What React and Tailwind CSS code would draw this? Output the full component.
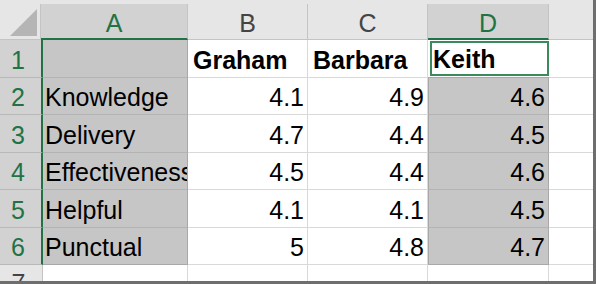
import React from "react";

const rows = [
  { n: 1, a: "", b: "Graham", c: "Barbara", d: "Keith", h: "h-[38px]", head: true },
  { n: 2, a: "Knowledge", b: "4.1", c: "4.9", d: "4.6", h: "h-[37px]" },
  { n: 3, a: "Delivery", b: "4.7", c: "4.4", d: "4.5", h: "h-[38px]" },
  { n: 4, a: "Effectiveness", b: "4.5", c: "4.4", d: "4.6", h: "h-[37px]" },
  { n: 5, a: "Helpful", b: "4.1", c: "4.1", d: "4.5", h: "h-[38px]" },
  { n: 6, a: "Punctual", b: "5", c: "4.8", d: "4.7", h: "h-[37px]" },
];

export default function App() {
  return (
    <div className="w-[596px] h-[284px] overflow-hidden bg-white border-r-[3px] border-b-[3px] border-[#6e6e6e] font-['Liberation_Sans',Arial,sans-serif] text-[25px] text-black">
      {/* header row */}
      <div className="flex h-[40px] bg-[#e6e6e6] pt-[4px]">
        <div className="w-[41px] h-[36px] shrink-0 border-r border-b border-[#c4c4c4]">
          <svg width="40" height="35" viewBox="0 0 40 35">
            <polygon points="10,32 37,5 37,32" fill="#b5b5b5" />
          </svg>
        </div>
        <div className="w-[147px] h-[36px] shrink-0 flex items-center justify-center pt-[5px] bg-[#d2d2d2] text-[#217346] border-r border-r-[#c4c4c4] border-b-2 border-b-[#217346]">
          A
        </div>
        <div className="w-[120px] h-[36px] shrink-0 flex items-center justify-center pt-[5px] text-[#444] border-r border-b border-[#c4c4c4]">
          B
        </div>
        <div className="w-[120px] h-[36px] shrink-0 flex items-center justify-center pt-[5px] text-[#444] border-r border-b border-[#c4c4c4]">
          C
        </div>
        <div className="w-[121px] h-[36px] shrink-0 flex items-center justify-center pt-[5px] bg-[#d2d2d2] text-[#217346] border-r border-r-[#c4c4c4] border-b-2 border-b-[#217346]">
          D
        </div>
        <div className="w-[44px] h-[36px] shrink-0 border-b border-[#c4c4c4]" />
      </div>

      {rows.map((r) => (
        <div key={r.n} className={`flex ${r.h}`}>
          <div className="w-[43px] shrink-0 flex items-center justify-center pr-[5px] pt-[4px] bg-[#d2d2d2] text-[#217346] border-r-2 border-r-[#217346] border-b border-b-[#b9b9b9]">
            {r.n}
          </div>
          <div
            className={`w-[145px] shrink-0 flex items-center pl-[2px] pt-[4px] overflow-hidden whitespace-nowrap bg-[#c6c6c6] border-r border-r-[#a8a8a8] border-b ${
              r.n === 6 ? "border-b-[#a8a8a8]" : "border-b-[#b3b3b3]"
            }`}
          >
            {r.a}
          </div>
          <div
            className={`w-[120px] shrink-0 flex items-center pt-[4px] border-r border-b border-[#d9d9d9] ${
              r.head ? "pl-[5px] font-bold" : "justify-end pr-[3px]"
            }`}
          >
            {r.b}
          </div>
          <div
            className={`w-[120px] shrink-0 flex items-center pt-[4px] border-r border-b border-[#d9d9d9] ${
              r.head ? "pl-[5px] font-bold" : "justify-end pr-[3px]"
            }`}
          >
            {r.c}
          </div>
          {r.head ? (
            <div className="w-[121px] shrink-0 flex pl-[2px] pt-[1px] pb-[1px] bg-white border-b border-b-[#a8a8a8]">
              <div className="flex-1 flex items-center pl-[1px] pt-[3px] font-bold border-2 border-[#3a8a5c]">
                {r.d}
              </div>
            </div>
          ) : (
            <div
              className={`w-[121px] shrink-0 flex items-center justify-end pr-[3px] pt-[4px] bg-[#c6c6c6] border-l border-r border-[#a8a8a8] border-b ${
                r.n === 6 ? "border-b-[#a8a8a8]" : "border-b-[#b3b3b3]"
              }`}
            >
              {r.d}
            </div>
          )}
          <div className="w-[44px] shrink-0 border-b border-[#d9d9d9]" />
        </div>
      ))}

      {/* row 7 partially visible */}
      <div className="flex h-[16px] overflow-hidden">
        <div className="w-[43px] shrink-0 flex justify-center pr-[5px] pt-[6px] bg-[#e6e6e6] text-[#444] border-r border-[#c4c4c4] leading-none">
          7
        </div>
        <div className="w-[145px] shrink-0 border-r border-[#d9d9d9]" />
        <div className="w-[120px] shrink-0 border-r border-[#d9d9d9]" />
        <div className="w-[120px] shrink-0 border-r border-[#d9d9d9]" />
        <div className="w-[121px] shrink-0 border-r border-[#d9d9d9]" />
        <div className="w-[44px] shrink-0" />
      </div>
    </div>
  );
}
